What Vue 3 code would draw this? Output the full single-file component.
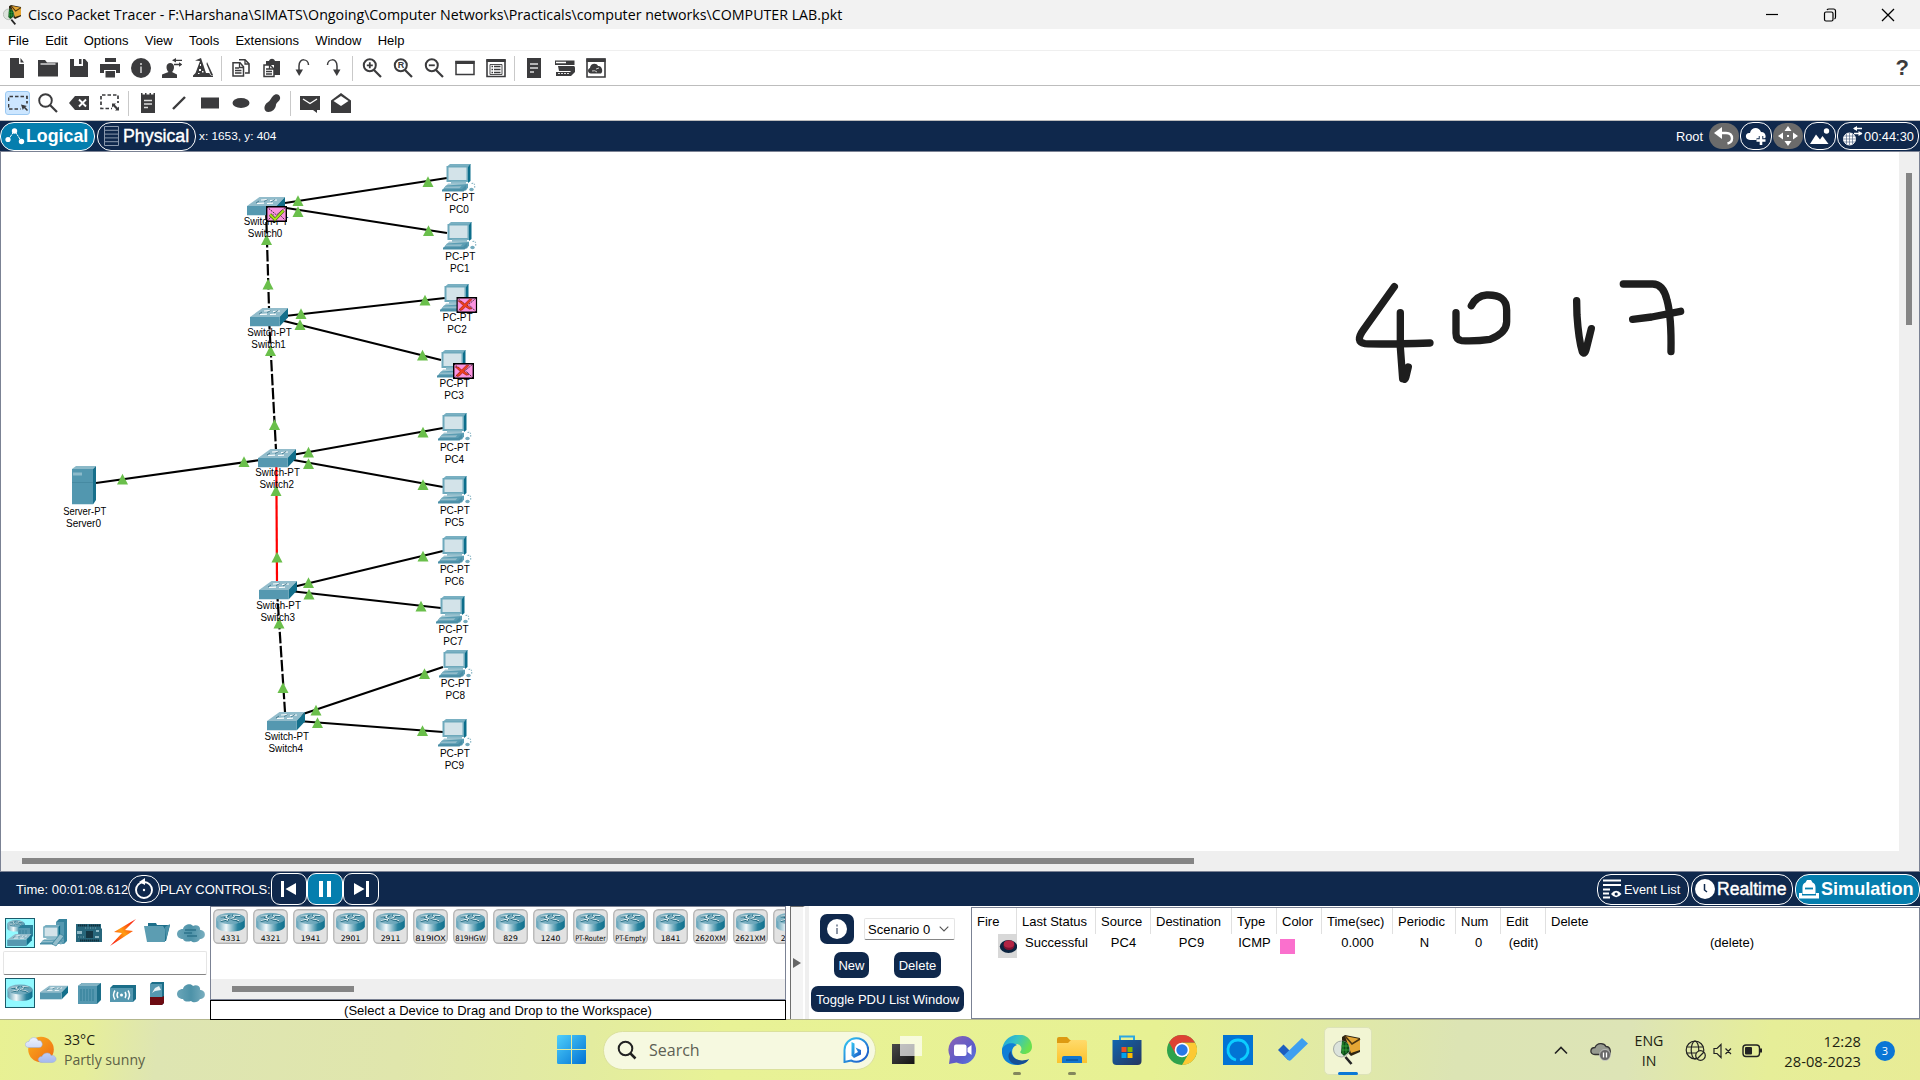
<script setup>
const menus = ['File', 'Edit', 'Options', 'View', 'Tools', 'Extensions', 'Window', 'Help']
const mainTools = ['new', 'open', 'save', 'print', 'info', 'user', 'wizard', '|', 'copy', 'paste', 'undo', 'redo', '|', 'zoomin', 'zoomreset', 'zoomout', 'window', 'list', '|', 'doc', 'rack', 'cloudwin']
const editTools = ['select', 'search', 'delete', 'resize', '|', 'note', 'line', 'rect', 'ellipse', 'free', '|', 'pdu', 'pduopen']

const pcs = [
  { n: 'PC0', x: 442, y: 164, l: 459.5, b: 200.8 },
  { n: 'PC1', x: 443, y: 222, l: 460.3, b: 259.8 },
  { n: 'PC2', x: 440, y: 284, l: 457.5, b: 321 },
  { n: 'PC3', x: 437, y: 350, l: 454.6, b: 387 },
  { n: 'PC4', x: 438, y: 413, l: 454.9, b: 450.9 },
  { n: 'PC5', x: 438, y: 476, l: 454.9, b: 513.9 },
  { n: 'PC6', x: 438, y: 536, l: 454.9, b: 573 },
  { n: 'PC7', x: 436, y: 596, l: 453.5, b: 633 },
  { n: 'PC8', x: 439, y: 650, l: 455.8, b: 687 },
  { n: 'PC9', x: 438, y: 719, l: 454.9, b: 756.9 },
]
const switches = [
  { n: 'Switch0', x: 247, y: 197, l: 266, b: 225 },
  { n: 'Switch1', x: 250, y: 308, l: 269.5, b: 336 },
  { n: 'Switch2', x: 258, y: 449, l: 277.6, b: 476 },
  { n: 'Switch3', x: 259, y: 581, l: 278.6, b: 609 },
  { n: 'Switch4', x: 267, y: 712, l: 286.7, b: 740 },
]
const links = [
  [285, 203, 447, 178], [280, 207, 447, 233], [285, 316, 445, 298], [280, 320, 441, 360],
  [292, 455, 443, 428], [288, 459, 443, 487], [96, 483, 260, 460], [293, 587, 443, 551],
  [290, 591, 441, 608], [300, 715, 443, 667], [298, 721, 443, 732],
]
const crossLinks = [[266, 208, 269, 308], [269, 318, 276, 450], [277, 590, 285, 712]]
const lights = [
  [428, 182], [298, 201], [298, 212], [428.5, 231], [266.5, 240], [268, 284.5], [425, 300.5], [301, 314],
  [300, 325], [422.5, 355.5], [270.5, 351], [274.5, 425], [423, 432.5], [308.5, 452.5], [308.5, 464],
  [423, 485], [244, 462], [122.5, 479.5], [276, 491], [277, 557.5], [423, 556.5], [308.5, 583],
  [309, 594.5], [421, 606.5], [279, 623.5], [283, 688], [424.5, 674], [316, 710.5], [317.5, 723], [422.5, 731],
]

const models = ['4331', '4321', '1941', '2901', '2911', '819IOX', '819HGW', '829', '1240', 'PT-Router', 'PT-Empty', '1841', '2620XM', '2621XM', '2811']
const categories = ['c-net', 'c-end', 'c-board', 'c-bolt', 'c-folder', 'c-cloud2']
const kinds = ['c-router', 'c-switch', 'c-hub', 'c-wifi', 'c-fw', 'c-cloud']

const columns = [
  { k: 'fire', t: 'Fire', w: 45 },
  { k: 'status', t: 'Last Status', w: 79, v: 'Successful' },
  { k: 'src', t: 'Source', w: 55, v: 'PC4' },
  { k: 'dst', t: 'Destination', w: 81, v: 'PC9' },
  { k: 'type', t: 'Type', w: 45, v: 'ICMP' },
  { k: 'color', t: 'Color', w: 45 },
  { k: 'time', t: 'Time(sec)', w: 71, v: '0.000' },
  { k: 'per', t: 'Periodic', w: 63, v: 'N' },
  { k: 'num', t: 'Num', w: 45, v: '0' },
  { k: 'edit', t: 'Edit', w: 45, v: '(edit)' },
  { k: 'del', t: 'Delete', w: 372, v: '(delete)' },
]
const apps = ['a-view', 'a-chat', 'a-edge', 'a-files', 'a-store', 'a-chrome', 'a-alexa', 'a-todo', 'a-pt']
</script>

<template>
  <div class="screen">
    <svg class="defs" width="0" height="0" aria-hidden="true">
      <defs>
        <linearGradient id="gSide" x1="0" x2="1"><stop offset="0" stop-color="#5b9db4" /><stop offset=".35" stop-color="#f2f8fa" /><stop offset=".75" stop-color="#2b849f" /><stop offset="1" stop-color="#106f8c" /></linearGradient>
        <linearGradient id="gTop" x1="0" x2="1"><stop offset="0" stop-color="#8ab8c8" /><stop offset="1" stop-color="#5d9eb4" /></linearGradient>
        <linearGradient id="gCloud" x1="0" x2="1"><stop offset="0" stop-color="#6aa5b8" /><stop offset=".5" stop-color="#4d92a8" /><stop offset="1" stop-color="#79aebf" /></linearGradient>
        <linearGradient id="gWin" x1="0" y1="0" x2="1" y2="1"><stop offset="0" stop-color="#4fd0fb" /><stop offset="1" stop-color="#0172d4" /></linearGradient>
        <linearGradient id="gBolt" x1="1" y1="0" x2="0" y2="1"><stop offset=".15" stop-color="#fb2a10" /><stop offset=".5" stop-color="#ff9d12" /><stop offset=".85" stop-color="#fb2a10" /></linearGradient>
        <linearGradient id="gFolder" x1="0" y1="0" x2="0" y2="1"><stop offset="0" stop-color="#ffda6b" /><stop offset="1" stop-color="#fcc32d" /></linearGradient>
        <linearGradient id="gSun" x1="0" y1="0" x2="1" y2="1"><stop offset="0" stop-color="#fbae1c" /><stop offset="1" stop-color="#ee6a14" /></linearGradient>
        <linearGradient id="gPuff" x1="0" y1="0" x2="0" y2="1"><stop offset="0" stop-color="#eef2ff" /><stop offset="1" stop-color="#a4b8ee" /></linearGradient>
        <linearGradient id="gChat" x1="0" y1="0" x2="1" y2="1"><stop offset="0" stop-color="#8c64b4" /><stop offset=".6" stop-color="#5d5bc9" /><stop offset="1" stop-color="#5a7be0" /></linearGradient>
        <linearGradient id="gEdge" x1="0" y1="0" x2="1" y2=".4"><stop offset="0" stop-color="#1c9fe0" /><stop offset=".5" stop-color="#35c3c6" /><stop offset="1" stop-color="#6ae04e" /></linearGradient>
        <linearGradient id="gStore" x1="0" y1="0" x2="1" y2="1"><stop offset="0" stop-color="#1166b0" /><stop offset="1" stop-color="#26365f" /></linearGradient>
        <linearGradient id="gBing" x1="0" y1="0" x2="1" y2="1"><stop offset="0" stop-color="#35c8f2" /><stop offset="1" stop-color="#1a4fc4" /></linearGradient>
        <linearGradient id="gDark" x1="0" y1="0" x2="1" y2="1"><stop offset="0" stop-color="#4a4a4a" /><stop offset="1" stop-color="#141414" /></linearGradient>
      </defs>

      <!-- toolbar glyphs -->
      <symbol id="new" viewBox="0 0 20 20"><path d="M3 0h9v6h5v14H3zM13.500 0 17 4.500h-3.500z" /></symbol>
      <symbol id="open" viewBox="0 0 20 20"><path d="M0 2h7l2 2.500h11v14H0z" /><path d="M2.500 6h15" stroke="#fff" stroke-width="1.200" /></symbol>
      <symbol id="save" viewBox="0 0 20 20"><path d="M1 1h4v7h9V1h2l3 3.500V19H1z" /><path d="M10 1h2.500v5H10z" /></symbol>
      <symbol id="print" viewBox="0 0 20 20"><path d="M5 0h11v4H5zM0 6h20v9h-4v-3H4v3H0zM5.500 13h9.500v6.500H5.500z" /></symbol>
      <symbol id="info" viewBox="0 0 20 20"><circle cx="10" cy="10" r="10" /><path d="M9.200 5h1.600v2H9.200zM9.200 8.500h1.600V15H9.200z" fill="#ccc" /></symbol>
      <symbol id="user" viewBox="0 0 20 20"><path d="M4.500 9c0-5.500 7.500-5.500 7.500 0 0 2.500-1 4-2 5l5 2.500V20H0v-3.500L6.500 14c-1-1-2-2.500-2-5z" /><path d="M20 2.300h-7M19 6.500h-7" stroke="#3b3b3d" stroke-width="1.300" /><path d="M14 0v4.600l-4-2.300zM17 4.200v4.600l3.500-2.300z" /></symbol>
      <symbol id="wizard" viewBox="0 0 20 20"><path d="M2 2.500 8 0l5 15h5v2.500h2V19H0v-1.500l2.500-2.500L7 3z" /><path d="m12 5 6 12" stroke="#fff" stroke-width="1.200" /><path d="m14 4 6 13h-2L13.500 6z" /><path d="M7 6h1v2H7zM6 11h2v2H6zM9 13h1.500v1.500H9zM5 15h1.500v1H5z" fill="#fff" /></symbol>
      <symbol id="copy" viewBox="0 0 20 20"><path d="M8 1.800h6l4 4V15h-4" fill="none" stroke="#3b3b3d" stroke-width="1.600" /><path d="M2 4.800h7l3.500 4V18H2z" fill="#fff" stroke="#3b3b3d" stroke-width="1.500" /><path d="M8.500 5v4.500h4M4 10h4M4 12.500h6.500M4 15h6.500M14 2v4h4" fill="none" stroke="#3b3b3d" stroke-width="1.300" /></symbol>
      <symbol id="paste" viewBox="0 0 20 20"><path d="M4 3h3c1-3 5-3 6 0h5v14h-6V7H4z" /><path d="M2 7h6l4 4v7.500H2z" fill="#fff" stroke="#3b3b3d" stroke-width="1.500" /><path d="M4 11h3M4 13.500h6M4 16h6M7.500 7v4H12" fill="none" stroke="#3b3b3d" stroke-width="1.300" /></symbol>
      <symbol id="undo" viewBox="0 0 20 20"><path d="M15.500 7c0-6-9.500-8-9.500 1v6" fill="none" stroke="#3b3b3d" stroke-width="1.500" /><path d="M2.500 11.500h7.500L6.200 18z" /></symbol>
      <symbol id="redo" viewBox="0 0 20 20"><path d="M3.500 7c0-6 9.500-8 9.500 1v6" fill="none" stroke="#3b3b3d" stroke-width="1.500" /><path d="M9 11.500h7.500L12.800 18z" /></symbol>
      <symbol id="zoomin" viewBox="0 0 20 20"><g fill="none" stroke="#3b3b3d"><circle cx="7.800" cy="7.300" r="6" stroke-width="2" /><path d="m12 12 7 7" stroke-width="2.200" /><path d="M4.800 7.300h6M7.800 4.300v6" stroke-width="1.800" /></g></symbol>
      <symbol id="zoomreset" viewBox="0 0 20 20"><g fill="none" stroke="#3b3b3d"><circle cx="7.800" cy="7.300" r="6" stroke-width="2" /><path d="m12 12 7 7" stroke-width="2.200" /></g></symbol>
      <symbol id="zoomout" viewBox="0 0 20 20"><g fill="none" stroke="#3b3b3d"><circle cx="7.800" cy="7.300" r="6" stroke-width="2" /><path d="m12 12 7 7" stroke-width="2.200" /><path d="M4.800 7.300h6" stroke-width="1.800" /></g></symbol>
      <symbol id="window" viewBox="0 0 20 20"><path d="M1 3.500h18v13H1z" fill="none" stroke="#3b3b3d" stroke-width="1.500" /><path d="M.5 3h19v3H.5z" /></symbol>
      <symbol id="list" viewBox="0 0 20 20"><path d="M1 2h18v16.500H1z" fill="none" stroke="#3b3b3d" stroke-width="1.600" /><path d="M.5 1h19v3H.5z" /><path d="M4 6.500h12v10H4z" fill="none" stroke="#3b3b3d" stroke-width=".9" /><path d="M5.500 8.500h1.500M8 8.500h6.500M5.500 11.500h1.500M8 11.500h6.500M5.500 14.500h1.500M8 14.500h6.500" stroke="#3b3b3d" stroke-width="1.400" /></symbol>
      <symbol id="doc" viewBox="0 0 20 20"><path d="M3 0h14v20H3z" /><path d="M6 6h8M6 10h8M6 14h4" stroke="#ddd" stroke-width="1.400" /></symbol>
      <symbol id="rack" viewBox="0 0 20 20"><path d="M0 2.500h19.500V7H0zM3 8h16.500v3L16 13H4zM1 14h14l5-5v5l-4 4H1z" /><path d="M1 4.500h10" stroke="#fff" stroke-width="1.500" /><path d="M3 15.500h11" stroke="#ddd" stroke-dasharray="2 1" /></symbol>
      <symbol id="cloudwin" viewBox="0 0 20 20"><path d="M1 1h18v18H1z" fill="none" stroke="#3b3b3d" stroke-width="1.600" /><path d="M.5.5h19V4H.5zM5 15.500c-3.500 0-4-4.500-1-5.500 0-5 7-5.500 8-2 4-1 5.500 6 3 7.500z" /><path d="M6 13q3-1 5 1M10 11l3-1" stroke="#ccc" fill="none" /></symbol>
      <symbol id="select" viewBox="0 0 20 20"><path d="M.5 8V3.500H19v7M.5 11v5h12" fill="none" stroke="#3b3b3d" stroke-width="1.700" stroke-dasharray="3.500 2" /><path d="m13 11.500 6 1.500-1.800 1L20 17l-1 1-3-3-1.200 2z" /></symbol>
      <symbol id="search" viewBox="0 0 20 20"><g fill="none" stroke="#3b3b3d"><circle cx="7.500" cy="7.500" r="6.300" stroke-width="1.900" /><path d="m12 12 7 7" stroke-width="2.200" /></g></symbol>
      <symbol id="delete" viewBox="0 0 20 20"><path d="m0 10 6-7h14v14H6z" /><path d="m10 6.500 7 7m0-7-7 7" stroke="#fff" stroke-width="1.900" /></symbol>
      <symbol id="resize" viewBox="0 0 20 20"><path d="M1 12V2h17v8M1 14.500v1h11" fill="none" stroke="#3b3b3d" stroke-width="1.700" stroke-dasharray="3.500 2" /><path d="M12 10.500h4l-1.200 1.200 3 3L19 13.500v4h-4l1.200-1.200-3-3L12 14.500z" /></symbol>
      <symbol id="note" viewBox="0 0 20 20"><path d="M3 1.500h14V20H3zM3 0h1.500v2H3zM7 0h1.500v2H7zM11.500 0H13v2h-1.500zM15.500 0H17v2h-1.500z" /><path d="M6 7.500h8M6 11h8M6 14.500h4" stroke="#ddd" stroke-width="1.500" /></symbol>
      <symbol id="line" viewBox="0 0 20 20"><path d="M4 16 16 4" stroke="#3b3b3d" stroke-width="2.400" /></symbol>
      <symbol id="rect" viewBox="0 0 20 20"><path d="M1 4.500h18v11H1z" /></symbol>
      <symbol id="ellipse" viewBox="0 0 20 20"><ellipse cx="10" cy="10" rx="8.500" ry="5" /></symbol>
      <symbol id="free" viewBox="0 0 20 20"><path d="M11 3c3-3.500 8-1.500 7 3-.5 2.500-3.500 3-4 5.500 0 4.500-4 7.500-7.500 7.500-5.500 0-5-7-1-9.500C8.500 7.500 9 5 11 3z" /></symbol>
      <symbol id="pdu" viewBox="0 0 20 20"><path d="M0 3h20v14h-3v3l-4-3H0z" /><path d="m3 6 7 4.500L17 6" fill="none" stroke="#fff" stroke-width="1.400" /></symbol>
      <symbol id="pduopen" viewBox="0 0 20 20"><path d="M0 7.500 10 0l10 7.500V20H0z" /><path d="m2.500 8 7.500-5 7.500 5-7.500 5z" fill="#fff" /></symbol>

      <!-- network devices -->
      <symbol id="pc" viewBox="0 0 34 28">
        <path d="m5 2.500 3-2.500h21l-2.500 2.500z" fill="#79b0c2" /><path d="m26 2.500 2.500-2.500v17L26 19z" fill="#0d6e8b" /><path d="M4.500 2h21.500v16H4.500z" fill="#6ea9bc" /><path d="M6.500 3.500h18V16h-18z" fill="#d3e3e9" /><path d="M9 17.500h15v2.500H9z" fill="#8fbccb" />
        <path d="M6 19.500h20V21l-4 2.500H3z" fill="#a5c8d3" /><path d="m4 21.500 22-1.500v3.500l-2 3H0z" fill="#5b9db3" /><path d="m3.500 22.500 16-.3-2 2H2z" fill="#93bdcb" /><path d="m0 25.500 20-.5 4-4v4l-2.500 2.500H0z" fill="#4b8fa7" />
        <ellipse cx="29.500" cy="25.500" rx="2.200" ry="1.800" fill="#72aabd" /><path d="M29.500 19.500q4-1 3 4.500" fill="none" stroke="#8fb9c7" stroke-width="1.200" stroke-dasharray="1.500 1" />
      </symbol>
      <symbol id="sw" viewBox="0 0 38 18.500">
        <path d="M0 9 12.500 0H38l-8.500 9z" fill="#92bccb" /><path d="m38 0-8.500 9v9.500L38 9.500z" fill="#136f8b" /><path d="M0 9h29.500v9.500H0z" fill="#5598b0" />
        <path d="m14 3 7-.4M10 6.500l7-.3M23 3.500l7-.5M20 6.500l6-.3" stroke="#fff" stroke-width="1.200" fill="none" /><path d="m17 4.500 4-2M9 6l3-2M24 5l4-2.500" stroke="#376f84" stroke-width=".8" />
      </symbol>
      <symbol id="server" viewBox="0 0 24 38.500">
        <path d="m0 3 4-3h20l-3 3z" fill="#8bb9c8" /><path d="m21 3 3-3v34l-3 4.500z" fill="#176f8b" /><path d="M0 3h21v35.500H0z" fill="#5297af" /><path d="M1 6.500h9v3H1z" fill="#8bbaca" /><path d="M0 16.500h21" stroke="#468aa2" />
      </symbol>
      <symbol id="router" viewBox="0 0 30 20">
        <path d="M.5 6v8c1 7 28 7 29 0V6z" fill="url(#gSide)" /><ellipse cx="15" cy="6" rx="14.500" ry="5.800" fill="url(#gTop)" />
        <path d="m5 4 7-.5-2 1.500 4 2M25 3.500 18 3l1 2-4 1.500M5 8.500l7-1.500-.5 2M17 7l4 .5 3 1.500" fill="none" stroke="#236c82" stroke-width="2" /><path d="m5 3.500 7-.5-2 1.500 4 2M25 3l-7-.5 1 2-4 1.500M5 8l7-1.500-.5 2M17 6.500l4 .5 3 1.500" fill="none" stroke="#eef6f8" stroke-width="1" />
      </symbol>
      <symbol id="c-router" viewBox="0 0 28 28"><use href="#router" x="1" y="5" width="26" height="18" /></symbol>
      <symbol id="c-net" viewBox="0 0 28 28"><use href="#router" x="1" y="1" width="18" height="12" /><path d="m12 9 4-3h11v11l-3 3H12z" fill="#2a7f99" /><path d="M12 9h12v10H12z" fill="#5598b0" /><path d="M14 11v7M17 11v7M20 11v7" stroke="#3a829b" /><use href="#sw" x="1" y="15" width="25" height="12" /></symbol>
      <symbol id="c-end" viewBox="0 0 28 28"><path d="m16 3 3-3h8v22l-3 3h-8z" fill="#34829c" /><path d="M16 3h8v22h-8z" fill="#5598b0" /><use href="#pc" x="0" y="6" width="24" height="20" /><path d="m12 25 8-10 4 2-8 10z" fill="#93bdcb" stroke="#347e96" stroke-width=".7" /></symbol>
      <symbol id="c-board" viewBox="0 0 28 28"><path d="M1 5h25v4l1 1v13H1z" fill="#27667b" /><path d="M11 12h7v7h-7z" fill="#153744" /><path d="M3 6.500h9M14 6.500h11M5 21.500h19" stroke="#102f3c" stroke-width="1.800" stroke-dasharray="1.500 .5" /><path d="M2 12h5v3H2zM21 11h3v2h-3zM20 17h4v2h-4z" fill="#8fb8c5" /><path d="M3 18h6M10 9h12" stroke="#82a9b5" stroke-dasharray="1 1.500" /></symbol>
      <symbol id="c-bolt" viewBox="0 0 28 28"><path d="M27 0 5 13l8 1L1 27l23-15-8-1z" fill="url(#gBolt)" /></symbol>
      <symbol id="c-folder" viewBox="0 0 28 28"><path d="M5 4h8l1 2h13l-4 16H5z" fill="#1d6f8a" /><path d="M1 7h19l2 3v13H4z" fill="#5c9db2" /><path d="m22 8 5-3-4 16z" fill="#4b91a8" /></symbol>
      <symbol id="c-cloud" viewBox="0 0 28 28"><path d="M6 20c-8 0-8-10 0-10 1-5 8-6 10-3 4-2 8 1 7 4 6.500 0 6.500 9 0 9-2 4-7 4-9 2-3 1-7 1-8-2z" fill="url(#gCloud)" /></symbol>
      <symbol id="c-cloud2" viewBox="0 0 28 28"><use href="#c-cloud" width="28" height="28" /><path d="M8 11h11M7 14h8M10 17h10" stroke="#2c738b" stroke-width="1.400" /></symbol>
      <symbol id="c-switch" viewBox="0 0 28 28"><use href="#sw" x="0" y="6" width="28" height="15" /></symbol>
      <symbol id="c-hub" viewBox="0 0 28 28"><path d="m3 7 4-3h19v17l-4 4H3z" fill="#1b6e89" /><path d="m3 7 4-3h19l-4 3z" fill="#82b3c4" /><path d="M3 7h19v18H3z" fill="#5598b0" /><path d="M6 10v12M9 10v12M12 10v12M15 10v12M18 10v12" stroke="#2f7c96" /></symbol>
      <symbol id="c-wifi" viewBox="0 0 28 28"><path d="m1 9 3-3h23v14l-3 3H1z" fill="#1b6e89" /><path d="M1 9h23v14H1z" fill="#5598b0" /><circle cx="12.500" cy="16" r="1.500" fill="#fff" /><path d="M9 13q-2 3 0 6M16 13q2 3 0 6M6 11.500q-3 4.500 0 9M19 11.500q3 4.500 0 9" fill="none" stroke="#fff" stroke-width="1.400" /></symbol>
      <symbol id="c-fw" viewBox="0 0 28 28"><path d="m7 5 2-2h12v21l-2 2H7z" fill="#1b6e89" /><path d="M7 5h12v13H7z" fill="#5598b0" /><path d="M7 18h12l2-1v7l-2 2H7z" fill="#6d0b12" /><path d="m9 14 3-5 4-2 2 4-6 1z" fill="#e8f2f5" /></symbol>
      <symbol id="mail" viewBox="0 0 21 16"><path d="M.7.700h19.600v14.600H.7z" fill="#fb93e0" stroke="#000" stroke-width="1.400" /><path d="m1 1 9.500 8L20 1M1 15l7-7M20 15l-7-7" fill="none" stroke="#000" stroke-width=".8" stroke-dasharray="1.500 1" /></symbol>
      <symbol id="cross" viewBox="0 0 16 14"><path d="m0 3 4 .5 3 3L12.500 1l2.500.5-5.500 6 5.500 4-3 .5-4-2.500L4.500 13 2 13.500 1.500 12 5.500 8z" fill="#f0401d" stroke="#8c1c14" stroke-width=".6" /></symbol>

      <!-- taskbar apps -->
      <symbol id="a-pt" viewBox="0 0 30 30"><path d="m9 2 3-2 15 3v14l-9 4-9-9z" fill="#2d2412" /><path d="m12 1 15 3v11l-9 3z" fill="#e5a735" /><path d="m12 1 7 8 8-5" fill="none" stroke="#4c3611" stroke-width="1.600" /><circle cx="8.500" cy="14" r="8" fill="#dce3dc" stroke="#a5aba5" /><path d="M9 6c6 0 8 5 7 11l-5 4-3-3z" fill="#0b4c17" /><path d="M10 7v12M13 8v10M8 11h8M9 15h7" stroke="#39b644" stroke-width=".7" /><path d="m12.500 22 6 7" stroke="#252525" stroke-width="2.600" /></symbol>
      <symbol id="a-view" viewBox="0 0 30 30"><path d="M0 9h22.500v20H0z" fill="url(#gDark)" /><path d="M8 1h22v20H8z" fill="#fff" opacity=".68" /></symbol>
      <symbol id="a-chat" viewBox="0 0 30 30"><path d="M15.500 1a13.500 14 0 1 1-6 26.500L2 29l1-7.500A14 14 0 0 1 15.500 1z" fill="url(#gChat)" /><rect x="7" y="9.500" width="12.500" height="11.500" rx="2" fill="#fff" /><path d="m20.500 13 4-3v10l-4-3z" fill="#fff" /></symbol>
      <symbol id="a-edge" viewBox="0 0 30 30"><path d="M0 15C2-5 30-5 30 12c0 7-10 9-12 5 3-3 1-8-4-8C7 9 2 13 0 15z" fill="url(#gEdge)" /><path d="M0 14c3-6 11-7 15-4-7 2-7 13 3 16 4 1 7 0 9-2-7 10-29 8-27-10z" fill="#0f7fd6" /><path d="M9 16c0 7 8 12 18 8-3 6-12 7-17 4-5-4-4-10-1-12z" fill="#154e96" /></symbol>
      <symbol id="a-files" viewBox="0 0 30 30"><path d="M0 4q0-2 2-2h8l3 3h8v6H0z" fill="#dd9a12" /><path d="M0 8h11l3-3h14q2 0 2 2v21H0z" fill="url(#gFolder)" /><path d="M5 28v-5q0-2 2-2h16q2 0 2 2v5z" fill="#1277cf" /><path d="M9 25h12" stroke="#0a4c91" stroke-width="1.200" /></symbol>
      <symbol id="a-store" viewBox="0 0 30 30"><path d="M8 6V1.500h14V6" fill="none" stroke="#2ba7e3" stroke-width="2" /><path d="M.5 5h29v21q0 4-4 4h-21q-4 0-4-4z" fill="url(#gStore)" /><path d="M9.500 12H14.500v5h-5z" fill="#f25022" /><path d="M15.500 12h5v5h-5z" fill="#7fba00" /><path d="M9.500 18h5v5h-5z" fill="#00a4ef" /><path d="M15.500 18h5v5h-5z" fill="#ffb900" /></symbol>
      <symbol id="a-chrome" viewBox="0 0 30 30"><circle cx="15" cy="15" r="15" fill="#2fa24c" /><path d="M15 7.500h13A15 15 0 0 1 15 30l6.500-11.300z" fill="#fcc934" /><path d="M2 7.500A15 15 0 0 1 28 7.500H15l-6.500 11.200z" fill="#dd4234" /><circle cx="15" cy="15" r="7.300" fill="#fff" /><circle cx="15" cy="15" r="5.700" fill="#2878e6" /></symbol>
      <symbol id="a-alexa" viewBox="0 0 30 30"><path d="M0 0h30v30H0z" fill="#0274d4" /><path d="M13 25C1 22 3 5 15 5s14 17 2 20" fill="none" stroke="#0ccdff" stroke-width="2.800" /></symbol>
      <symbol id="a-todo" viewBox="0 0 30 30"><path d="m0 15 5.500-5.500 10 10L10 25z" fill="#1b5ec0" /><path d="M10 25 5.800 20.500 24 3l6 5.500L13 25q-1.500 1.500-3 0z" fill="#3d9ff0" /></symbol>
    </svg>

    <header class="titlebar">
      <svg class="appicon" width="20" height="20"><use href="#a-pt" /></svg>
      <span class="title">Cisco Packet Tracer - F:\Harshana\SIMATS\Ongoing\Computer Networks\Practicals\computer networks\COMPUTER LAB.pkt</span>
      <div class="winbtns">
        <svg width="14" height="14"><path d="M1 6.500h12" stroke="#000" stroke-width="1.200" /></svg>
        <svg width="14" height="14" fill="none" stroke="#000" stroke-width="1.200"><rect x="1.500" y="4" width="8.500" height="9" rx="1.500" /><path d="M4 2Q4.500 1 6 1h4.500q2 0 2 2v6q0 1.500-1 2" /></svg>
        <svg width="14" height="14"><path d="m1 1 12 12m0-12L1 13" stroke="#000" stroke-width="1.300" /></svg>
      </div>
    </header>
    <nav class="menubar"><span v-for="m in menus" :key="m">{{ m }}</span></nav>
    <div class="toolbar">
      <template v-for="(t, i) in mainTools" :key="i">
        <i v-if="t === '|'" class="sep"></i>
        <span v-else class="tool"><svg width="20" height="20"><use :href="'#' + t" /><text v-if="t === 'zoomreset'" class="letter" x="7.900" y="10.400">R</text></svg></span>
      </template>
      <span class="help">?</span>
    </div>
    <div class="toolbar">
      <template v-for="(t, i) in editTools" :key="i">
        <i v-if="t === '|'" class="sep"></i>
        <span v-else class="tool" :class="{ on: t === 'select' }"><svg width="20" height="20"><use :href="'#' + t" /></svg></span>
      </template>
    </div>

    <div class="navbar">
      <button class="pill logical on"><svg width="20" height="20"><path d="m3.500 13.500 6-9 7 11" fill="none" stroke="#fff" stroke-width="1" stroke-dasharray="2.500 .6" /><g fill="#fff"><circle cx="3" cy="13.500" r="2.600" /><circle cx="9.500" cy="5" r="2.700" /><circle cx="16.500" cy="15.500" r="2.700" /></g></svg><span>Logical</span></button>
      <button class="pill physical"><svg width="15" height="20"><path d="M.5.500h14v19H.5zM.5 4.300h14M.5 8.100h14M.5 11.900h14M.5 15.700h14" fill="none" stroke="#8b99ad" /></svg><span>Physical</span></button>
      <span class="coords">x: 1653, y: 404</span>
      <div class="navright">
        <span class="root">Root</span>
        <button class="round grey"><svg width="22" height="20"><path d="m1 7 8-6v12z" fill="#fff" /><path d="M6 7h7q6 0 6 5.500 0 4-4.500 5" fill="none" stroke="#fff" stroke-width="2.400" /></svg></button>
        <button class="round"><svg width="22" height="20"><path d="M5 14c-6-.5-5-8 0-7 1-6 9-7 11-1 6 0 6 8 1 8z" fill="#fff" /><path d="M16 10v9M11.500 14.500h9" stroke="#0f284c" stroke-width="4.500" /><path d="M16 10v9M11.500 14.500h9" stroke="#fff" stroke-width="2.600" /></svg></button>
        <button class="round grey"><svg width="22" height="22" fill="#fff"><path d="m11 1 3.500 5h-7zM11 21l3.500-5h-7zM1 11l5-3.500v7zM21 11l-5-3.500v7zM10 10h2v2h-2z" /></svg></button>
        <button class="round"><svg width="22" height="20" fill="#fff"><path d="m1 18 6-9.500 4 5 2.500-3.500 6 8z" /><circle cx="17.500" cy="5" r="2.700" /></svg></button>
        <button class="round clock"><svg width="21" height="20"><circle cx="7.500" cy="13" r="6" fill="#fff" stroke="#fff" /><path d="M1 13h13M7.500 7v12M4.500 8v10M10.500 8v10M2.500 10h10M2.500 16h10" stroke="#42587a" stroke-width=".6" /><path d="M12 2.500h8M12 7.500h8" stroke="#fff" stroke-width="1.600" /><path d="m11 2.500 4-2.500v5zM20.500 7.500l-4-2.500v5z" fill="#fff" /></svg><span>00:44:30</span></button>
      </div>
    </div>

    <main class="workspace">
      <div class="view">
        <svg class="topology" width="1898" height="699" viewBox="1 152 1898 699">
          <g stroke="#000" stroke-width="2.200">
            <line v-for="(l, i) in links" :key="i" :x1="l[0]" :y1="l[1]" :x2="l[2]" :y2="l[3]" />
            <line v-for="(l, i) in crossLinks" :key="'x' + i" :x1="l[0]" :y1="l[1]" :x2="l[2]" :y2="l[3]" stroke-dasharray="11.500 2.500" />
          </g>
          <path d="M276.300 462 277 582" stroke="#f00" stroke-width="2.200" />
          <use href="#server" x="72" y="466" width="24" height="38.500" />
          <use v-for="s in switches" :key="s.n" href="#sw" :x="s.x" :y="s.y" width="38" height="18.500" />
          <use v-for="p in pcs" :key="p.n" href="#pc" :x="p.x" :y="p.y" width="34" height="28" />
          <path v-for="(t, i) in lights" :key="i" :d="`M${t[0]} ${t[1] - 5.700}l5.500 10.700h-11z`" fill="#6abf4b" />
          <g class="labels">
            <text x="84.700" y="515" textLength="43" lengthAdjust="spacingAndGlyphs">Server-PT</text><text x="83.500" y="527">Server0</text>
            <template v-for="s in switches" :key="s.n"><text :x="s.l" :y="s.b" textLength="44.500" lengthAdjust="spacingAndGlyphs">Switch-PT</text><text :x="s.l - 0.900" :y="s.b + 12" textLength="34.500" lengthAdjust="spacingAndGlyphs">{{ s.n }}</text></template>
            <template v-for="p in pcs" :key="p.n"><text :x="p.l" :y="p.b">PC-PT</text><text :x="p.l - 0.500" :y="p.b + 12">{{ p.n }}</text></template>
          </g>
          <use href="#mail" x="266" y="206" width="21" height="16" />
          <path d="m270 214.500 5 5 8.500-9" fill="none" stroke="#3a5b0c" stroke-width="3.200" /><path d="m270 214.500 5 5 8.500-9" fill="none" stroke="#a5e01e" stroke-width="2" />
          <use href="#mail" x="456.300" y="297" width="21" height="16" />
          <use href="#cross" x="458" y="298" width="15" height="13" />
          <use href="#mail" x="453" y="363" width="21" height="16" />
          <use href="#cross" x="455" y="364" width="15" height="13" />
          <g transform="translate(1330 260) scale(.3333)" fill="none" stroke="#1e1e1e" stroke-width="22" stroke-linecap="round" stroke-linejoin="round">
            <path d="M193 80 100 210Q74 246 105 251 150 254 300 249M211 158 211 262 218 356M218 340Q222 370 228 350L235 321" />
            <path d="M424 137Q440 107 470 105 530 103 530 150V185Q530 218 480 238 440 244 395 242 378 240 378 220V158" />
            <path d="M740 122 741 165Q746 240 757 275 764 288 770 262L784 206" />
            <path d="M880 72H968Q1000 72 1011 120 1025 170 1023 275M908 178 965 171 1052 154" />
          </g>
        </svg>
        <div class="vscroll"><i></i></div>
      </div>
      <div class="hscroll"><i></i></div>
    </main>

    <div class="playbar">
      <span class="time">Time: 00:01:08.612</span>
      <button class="reset"><svg width="22" height="22"><circle cx="11" cy="12" r="8" fill="none" stroke="#fff" stroke-width="1.900" /><path d="m6 4 6-4v7z" fill="#fff" /><circle cx="11" cy="12" r="1.200" fill="#fff" /></svg></button>
      <span class="playlabel">PLAY CONTROLS:</span>
      <button class="play"><svg width="18" height="18" fill="#fff"><path d="M1 1h3v16H1zM16 3v12L5.500 9z" /></svg></button>
      <button class="play on"><svg width="18" height="18" fill="#fff"><path d="M3 1h4v16H3zM11 1h4v16h-4z" /></svg></button>
      <button class="play"><svg width="18" height="18" fill="#fff"><path d="M14 1h3v16h-3zM2 3v12l10.500-6z" /></svg></button>
      <div class="modes">
        <button class="pill events"><svg width="20" height="20"><path d="M1 1.500h18M1 6h18M1 10.500h7M1 14.500h6M1 18.500h7" stroke="#fff" stroke-width="1.900" /><path d="M9 15q5-6.500 10.500 0-5.500 6.500-10.500 0z" fill="#fff" /><circle cx="14.200" cy="15" r="1.600" fill="#0f284c" /></svg><span>Event List</span></button>
        <button class="pill realtime"><svg width="20" height="20"><circle cx="10" cy="10" r="10" fill="#fff" /><path d="M9.500 5v6l2.500 2" fill="none" stroke="#0f284c" stroke-width="1.500" /></svg><span>Realtime</span></button>
        <button class="pill sim on"><svg width="20" height="20"><path d="M3.500 15V8.500q0-4 3-5L8 1h4l1.500 2.500q3 1 3 5V15z" fill="#fff" /><path d="M0 14h3v2.500h14V14h3v5.500H0z" fill="#fff" /><path d="M6 9.500h8" stroke="#0780ae" stroke-width="1.800" /></svg><span>Simulation</span></button>
      </div>
    </div>

    <section class="bottom">
      <div class="palette">
        <div class="prow"><span v-for="(c, i) in categories" :key="c" :class="{ sel: i === 0 }"><svg width="28" height="28"><use :href="'#' + c" /></svg></span></div>
        <div class="filter"></div>
        <div class="prow"><span v-for="(c, i) in kinds" :key="c" :class="{ sel: i === 0 }"><svg width="28" height="28"><use :href="'#' + c" /></svg></span></div>
      </div>
      <div class="models">
        <div class="shelf">
          <div class="tiles">
            <svg v-for="m in models" :key="m" width="35" height="35">
              <rect x=".75" y=".75" width="33.500" height="33.500" rx="4.500" fill="#e2e2e2" stroke="#b4b4b4" stroke-width="1.300" />
              <use href="#router" x="2.700" y="3.500" width="29.600" height="20" />
              <text v-if="m.length > 4" x="17.500" y="31.500" textLength="30.500" lengthAdjust="spacingAndGlyphs">{{ m }}</text>
              <text v-else x="17.500" y="31.500">{{ m }}</text>
            </svg>
          </div>
          <div class="sscroll"><i></i></div>
        </div>
        <div class="hint">(Select a Device to Drag and Drop to the Workspace)</div>
      </div>
      <div class="splitter"><i></i></div>
      <div class="scenario">
        <div class="srow top">
          <button class="ibtn"><svg width="20" height="20"><circle cx="10" cy="10" r="10" fill="#fff" /><path d="M9 5.500h2v2H9zM9 9h2v6H9z" fill="#8c95a5" /></svg></button>
          <div class="select"><span>Scenario 0</span><svg width="10" height="6"><path d="m.7.700 4.300 4.300 4.300-4.300" fill="none" stroke="#555" stroke-width="1.100" /></svg></div>
        </div>
        <div class="srow mid"><button>New</button><button>Delete</button></div>
        <div class="srow"><button class="toggle">Toggle PDU List Window</button></div>
      </div>
      <div class="pdus">
        <div v-for="c in columns" :key="c.k" class="col" :style="{ width: c.w + 'px' }">
          <div class="th">{{ c.t }}</div>
          <div v-if="c.k === 'fire'" class="fire"><svg width="19" height="24"><path d="M0 0h19v24H0z" fill="#d8d8d8" /><ellipse cx="10.500" cy="12.500" rx="8.700" ry="6.500" fill="#0c2440" /><ellipse cx="11" cy="11.500" rx="5.500" ry="4.500" fill="#7d1230" /><ellipse cx="11" cy="10" rx="5.300" ry="3.800" fill="#b22444" /></svg></div>
          <div v-else-if="c.k === 'color'" class="swatch"></div>
          <div v-else class="td">{{ c.v }}</div>
        </div>
      </div>
    </section>

    <footer class="taskbar">
      <svg class="weather" width="32" height="30"><circle cx="16" cy="15.500" r="12.800" fill="url(#gSun)" /><path d="M4 13.500c-5 0-5-6 0-6 1-5 8-5 9-1 5-1 6 7 1 7zM17 28.500c-5 0-5-6 0-6 1-4 8-5 9-1 6-1 7 7 1 7z" fill="url(#gPuff)" stroke="#97abdf" stroke-width=".5" /></svg>
      <div class="wtext"><b>33°C</b><span>Partly sunny</span></div>
      <svg class="start" width="30" height="30"><path d="M0 1.500Q0 0 1.500 0H14v14H0zM15 0h12.500Q29 0 29 1.500V14H15zM0 15h14v14H1.500Q0 29 0 27.500zM15 15h14v12.500q0 1.500-1.500 1.500H15z" fill="url(#gWin)" /></svg>
      <div class="searchbox">
        <svg width="20" height="20" fill="none" stroke="#222" stroke-width="2"><circle cx="8.500" cy="8.500" r="6.800" /><path d="m13 13 5.500 5.500" stroke-width="2.500" /></svg>
        <span>Search</span>
        <svg class="bing" width="26" height="26"><path d="M13 1.200a11.800 11.800 0 1 1-5 22.300L1.500 25V13A11.800 11.800 0 0 1 13 1.200z" fill="#fff" stroke="url(#gBing)" stroke-width="2" /><path d="m8.500 5 3 1.500v10l-3 2.500zM8.500 18.500 15 15l-2.500-4.500 5.500 2.500v4.500L11 21z" fill="url(#gBing)" /></svg>
      </div>
      <div class="apps">
        <span v-for="a in apps" :key="a" class="app" :class="[a, { run: a === 'a-edge' || a === 'a-files' }]"><svg width="30" height="30"><use :href="'#' + a" /></svg></span>
      </div>
      <div class="tray">
        <svg class="up" width="14" height="9"><path d="m1 7.500 6-6 6 6" fill="none" stroke="#222" stroke-width="1.600" /></svg>
        <svg class="drive" width="22" height="20"><path d="M5 13.500c-6 0-5-7 0-7 2-5 9-5 11-1 4 0 5 4 4 8z" fill="#969a90" stroke="#333" stroke-width="1.300" /><circle cx="15" cy="14" r="5.500" fill="#686868" stroke="#ddd" stroke-width=".6" /><path d="M13.500 11.500v5M16.500 11.500v5" stroke="#fff" stroke-width="1.300" /></svg>
        <div class="lang"><span>ENG</span><span>IN</span></div>
        <svg class="globe" width="22" height="22" fill="none" stroke="#222" stroke-width="1.200"><circle cx="10" cy="10" r="8.800" /><ellipse cx="10" cy="10" rx="3.800" ry="8.800" /><path d="M1.500 7h17M1.500 13h11" /><circle cx="15.500" cy="15.500" r="4.800" fill="#e2eaa4" /><path d="m12 19 7-7" /></svg>
        <svg class="vol" width="20" height="16" fill="none" stroke="#222" stroke-width="1.200"><path d="M1 5.500h3L8 1.500v13L4 10.500H1zM12.500 5.500l5.500 5.500m0-5.500L12.500 11" /></svg>
        <svg class="bat" width="21" height="14"><rect x="1" y="1" width="16.500" height="11.500" rx="3" fill="none" stroke="#222" stroke-width="1.400" /><rect x="3" y="3" width="7" height="7.500" rx="1" fill="#222" /><path d="M19 4.500v4" stroke="#222" stroke-width="2" /></svg>
        <div class="when"><span>12:28</span><span>28-08-2023</span></div>
        <span class="badge">3</span>
      </div>
    </footer>
  </div>
</template>

<style>
html, body { margin: 0; overflow: hidden; }
</style>

<style scoped>
.screen { width: 1920px; height: 1080px; display: flex; flex-direction: column; background: #fff; font: 13px "Liberation Sans", Arial, sans-serif; color: #000; overflow: hidden; }
.screen * { box-sizing: border-box; }
.defs { position: absolute; }
svg { display: block; flex: none; }
button { font: inherit; color: #fff; padding: 0; margin: 0; border: 0; background: #0f284c; white-space: nowrap; }
.titlebar { height: 29px; flex: none; background: #f2f2f2; display: flex; align-items: center; padding-left: 3px; font-family: "Open Sans", "Noto Sans", sans-serif; }
.appicon { margin-right: 5px; }
.title { font-size: 14.230px; white-space: nowrap; margin-top: -1px; }
.winbtns { margin-left: auto; display: flex; gap: 44px; padding-right: 25px; }
.menubar { height: 22px; flex: none; border-bottom: 1px solid #efefef; display: flex; align-items: center; gap: 16.200px; padding: 2px 0 0 8px; }
.toolbar { height: 35px; flex: none; border-bottom: 1px solid #bdbdbd; display: flex; align-items: center; padding-left: 1px; fill: #3b3b3d; }
.tool { width: 31px; height: 24px; display: flex; align-items: center; justify-content: center; }
.tool.on { width: 25px; margin: 0 2px 0 4px; background: #cce6ff; border: 1px solid #9cc9f2; border-radius: 3px; }
.letter { font-size: 9px; font-weight: 700; text-anchor: middle; }
.sep { width: 1px; height: 25px; margin: 0 3px; background: #c9c9c9; }
.help { margin-left: auto; margin-right: 11px; font-size: 22px; font-weight: 700; color: #3b3b3d; }
.navbar { height: 31px; flex: none; background: #0f284c; border-bottom: 1px solid #7b8294; display: flex; align-items: center; color: #fff; }
.pill { height: 29px; border: 1px solid #fff; border-radius: 14px; display: flex; align-items: center; }
.pill.on { background: #057eae; font-weight: 700; }
.logical { width: 95px; padding-left: 4px; font-size: 17.800px; }
.logical span { margin-left: 1px; }
.physical { width: 99px; margin-left: 2px; padding-left: 6px; font-size: 17.800px; -webkit-text-stroke: .4px #fff; }
.physical span { margin-left: 4px; }
.coords { margin-left: 3px; font-size: 11.800px; }
.navright { margin-left: auto; display: flex; align-items: center; height: 100%; padding-right: 1px; }
.root { font-size: 12.800px; margin-right: 5px; }
.round { width: 32px; height: 28px; border: 1px solid #fff; border-radius: 13px; display: flex; align-items: center; justify-content: center; }
.round.grey { width: 30px; height: 26px; margin: 0 1px; background: #6b6b6b; border: 0; }
.clock { width: 82px; margin-left: 1px; font-size: 12.800px; gap: 1px; }
.workspace { height: 720px; flex: none; display: flex; flex-direction: column; border: 1px solid #7b8294; border-top: 0; }
.view { height: 699px; display: flex; overflow: hidden; }
.topology { flex: 0 1 auto; }
.labels { font-size: 10px; text-anchor: middle; }
.vscroll { width: 20px; flex: none; background: #efefef; padding: 21px 0 0 7px; }
.vscroll i { display: block; width: 6px; height: 152px; background: #858585; }
.hscroll { height: 20px; background: #efefef; padding: 7px 0 0 21px; }
.hscroll i { display: block; width: 1172px; height: 6px; background: #858585; }
.playbar { height: 34px; flex: none; background: #0f284c; color: #fff; display: flex; align-items: center; padding-left: 16px; }
.time { width: 112px; white-space: nowrap; letter-spacing: .04px; }
.reset { width: 32px; height: 28px; border: 1px solid #fff; border-radius: 14px; display: flex; align-items: center; justify-content: center; }
.playlabel { width: 111px; white-space: nowrap; letter-spacing: -.06px; }
.play { width: 36px; height: 32px; border: 1px solid #fff; border-radius: 9px; display: flex; align-items: center; justify-content: center; }
.play.on { background: #057eae; }
.modes { margin-left: auto; display: flex; gap: 2px; }
.modes .pill { height: 31px; }
.events { width: 92px; padding-left: 4px; font-size: 12.800px; gap: 2px; }
.realtime { width: 102px; padding-left: 3px; font-size: 17.600px; -webkit-text-stroke: .4px #fff; gap: 2px; }
.sim { width: 125px; padding-left: 3px; font-size: 18.100px; gap: 2px; }
.bottom { height: 114px; flex: none; display: flex; border-bottom: 1px solid #b3b68c; }
.palette { width: 210px; padding-top: 11px; }
.prow { display: flex; height: 31px; align-items: center; padding-left: 5px; gap: 4.300px; }
.prow span { width: 30px; height: 30px; display: flex; align-items: center; justify-content: center; border: 1px solid transparent; }
.prow .sel { background: #92f9ff; border-color: #1b5b6b; }
.filter { width: 204px; height: 24px; margin: 3px 0 2px 3px; border: 1px solid #e5e5e5; border-bottom-color: #868686; border-radius: 2px; }
.models { width: 576px; }
.shelf { height: 94px; border: 1px solid #7b8294; }
.tiles { height: 72px; padding: 2px 0 0 2px; display: flex; gap: 5px; overflow: hidden; font: 7.700px "DejaVu Sans", sans-serif; text-anchor: middle; }
.tiles svg { overflow: visible; }
.sscroll { height: 20px; background: #efefef; padding: 7px 0 0 21px; }
.sscroll i { display: block; width: 122px; height: 6px; background: #858585; }
.hint { height: 20px; border: 1px solid #000; text-align: center; line-height: 19px; letter-spacing: .02px; }
.splitter { width: 15px; margin-left: 4px; border-left: 1px solid #6e6e6e; border-top: 1px solid #6e6e6e; background: #f4f4f4; border-right: 2px solid #fff; display: flex; align-items: center; padding-left: 2px; }
.splitter i { border-left: 8px solid #666; border-top: 5px solid transparent; border-bottom: 5px solid transparent; }
.scenario { width: 166px; border-left: 4px solid #efefef; }
.srow { display: flex; padding-left: 2px; }
.srow button { height: 26px; border-radius: 7px; padding: 0 5px; }
.srow.top { padding: 8px 0 0 11px; gap: 10px; align-items: center; }
.srow .ibtn { width: 34px; height: 30px; display: flex; align-items: center; justify-content: center; }
.select { width: 91px; height: 22px; border: 1px solid #e5e5e5; border-bottom-color: #868686; border-radius: 2px; display: flex; align-items: center; padding-left: 3px; gap: 9px; white-space: nowrap; }
.srow.mid { padding: 8px 0 8px 25px; gap: 25px; }
.mid button:first-child { width: 35px; padding: 0; }
.mid button:last-child { width: 47px; padding: 0; }
.srow .toggle { width: 153px; padding: 0; }
.pdus { width: 949px; height: 112px; margin-top: 1px; border: 1px solid #7b8294; display: flex; }
.col { flex: none; text-align: center; overflow: hidden; }
.th { height: 26px; line-height: 27px; text-align: left; padding-left: 5px; border-right: 1px solid #e0e0e0; white-space: nowrap; }
.col:last-child .th { border: 0; }
.td { line-height: 17px; }
.fire { display: flex; justify-content: flex-end; }
.swatch { width: 15px; height: 15px; margin: 5px 0 0 3px; background: #fa70cd; }
.taskbar { height: 60px; flex: none; display: flex; align-items: center; padding: 1px 0 0 25px; font-family: "Open Sans", "Noto Sans", sans-serif; color: #1d1f12; background: linear-gradient(97deg, #e8f193 0, #e6ee9b 90px, #dee5b2 160px, #e0e6ac 400px, #e3ec9f 590px, #e8f296 720px, #e7f193 1150px, #e1eaa5 1320px, #dce4b4 1450px, #dde4b6 1620px, #e6ee98 1760px, #e8ec96 1920px); }
.weather { margin-top: -4px; }
.wtext { width: 120px; margin-left: 7px; display: flex; flex-direction: column; font-size: 14.100px; line-height: 20px; margin-top: -1px; }
.wtext b { font-weight: 400; }
.wtext span { color: #5c6145; }
.start { margin: -1px 0 0 373px; }
.searchbox { width: 273px; height: 39px; margin: -1px 0 0 16px; border: 1px solid #dbe19d; border-radius: 20px; background: #f6f9e0; display: flex; align-items: center; padding: 0 6px 0 13px; font-size: 16px; color: #5d5f54; }
.searchbox span { margin-left: 12px; }
.bing { margin-left: auto; }
.apps { display: flex; gap: 7.100px; margin: 0 0 0 7px; }
.app { width: 48px; height: 48px; display: flex; align-items: center; justify-content: center; position: relative; }
.app svg { margin-top: -1px; }
.a-pt { background: #f2f5d3; border: 1px solid #dde3b8; border-radius: 5px; }
.run::after, .a-pt::after { content: ""; position: absolute; bottom: 0; width: 8px; height: 3px; border-radius: 2px; background: #83875c; }
.a-pt::after { width: 20px; background: #0a78d6; bottom: -1px; }
.tray { margin-left: auto; display: flex; align-items: center; padding-right: 25px; line-height: 20px; }
.lang { width: 30px; margin: 0 21px 0 22px; display: flex; flex-direction: column; align-items: center; font-size: 14.200px; line-height: 20px; }
.drive { margin-left: 22px; }
.vol { margin: 0 9px 0 6px; }
.when { width: 98px; display: flex; flex-direction: column; align-items: flex-end; font-size: 14.700px; white-space: nowrap; }
.badge { width: 20px; height: 20px; margin-left: 14px; border-radius: 50%; background: #0a76d6; color: #fff; font-size: 11px; text-align: center; }
</style>
